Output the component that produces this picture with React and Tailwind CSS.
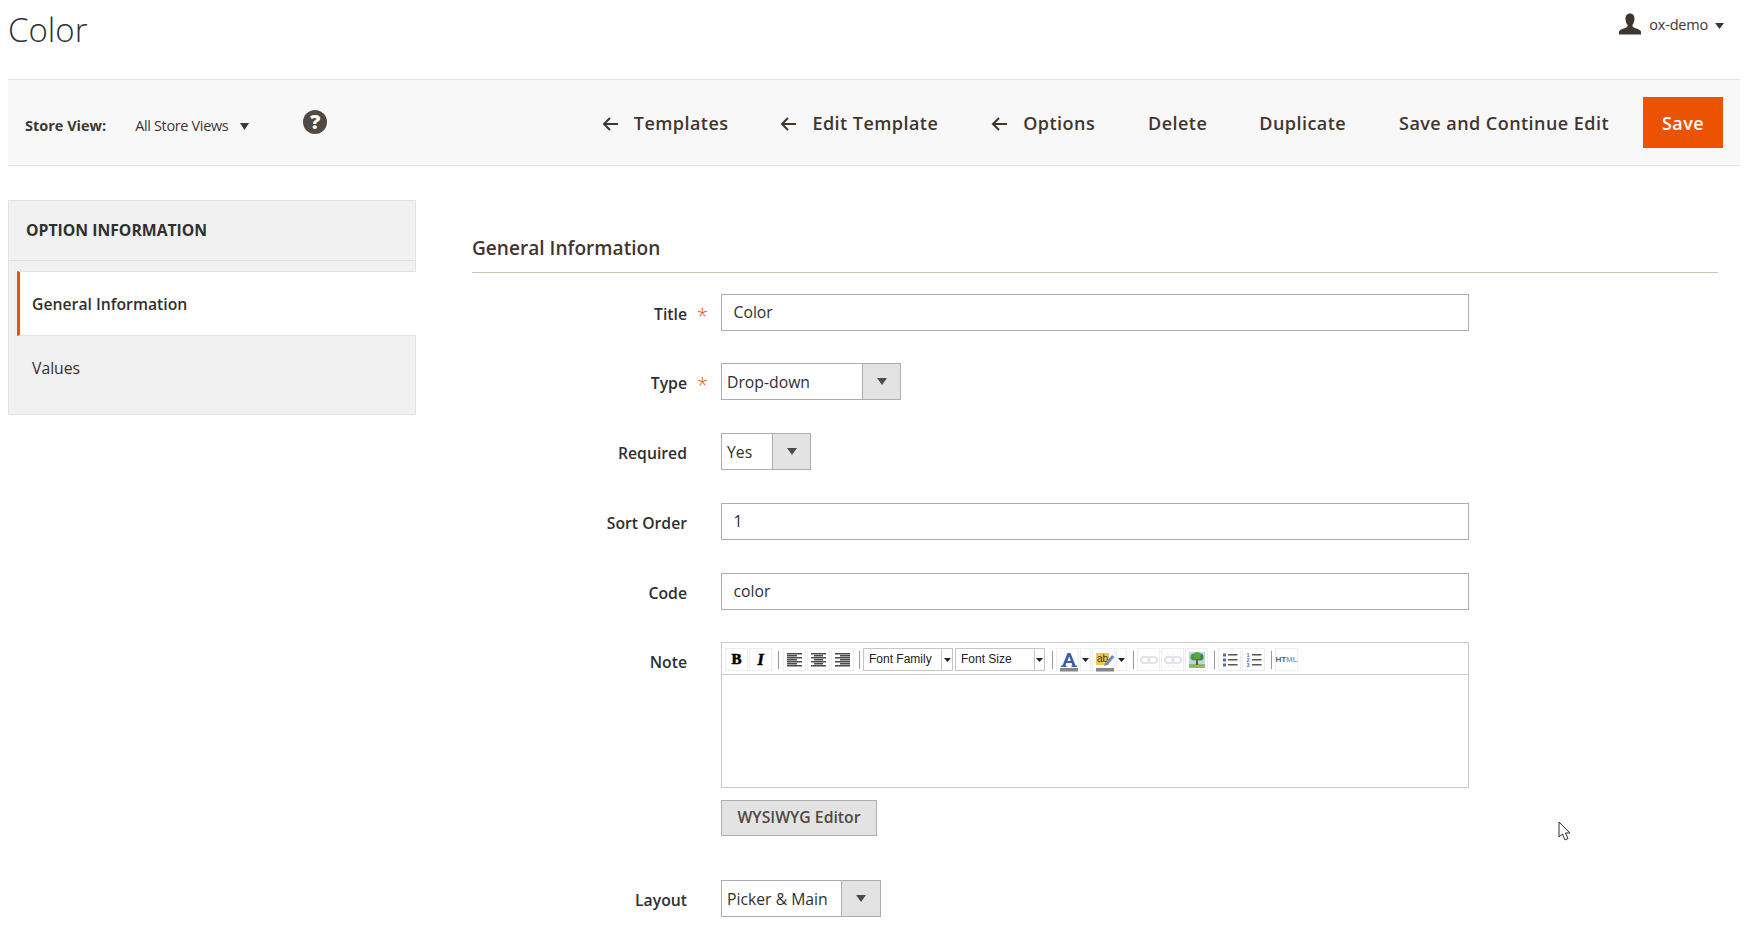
import React from "react";

const Label = ({ children, req }) => (
  <div className="w-[249px] shrink-0 flex justify-end pt-[8px] relative">
    <span className="font-semibold text-[15.75px] leading-[24px] text-[#303030] pr-[34px]">{children}</span>
    {req && <span className="absolute right-[13px] top-[10px] text-[#eb5202] text-[20px] font-light leading-[24px]">*</span>}
  </div>
);

const Row = ({ label, req, children, mb = "mb-[32px]" }) => (
  <div className={`flex ${mb}`}>
    <Label req={req}>{label}</Label>
    <div className="h-[37px]">{children}</div>
  </div>
);

const Input = ({ value }) => (
  <div className="w-[748px] h-[37px] border border-[#adadad] bg-white pl-[11.500px] text-[15.75px] leading-[35px] text-[#303030]">{value}</div>
);

const Select = ({ value, w, arrowW }) => (
  <div className="flex h-[37px] border border-[#adadad] bg-white" style={{ width: w }}>
    <div className="flex-1 pl-[5px] text-[15.75px] leading-[36px] text-[#303030]">{value}</div>
    <div className="h-full border-l border-[#adadad] bg-[#e3e3e3] flex items-center justify-center" style={{ width: arrowW }}>
      <svg width="10" height="7" viewBox="0 0 10 7"><path d="M0 0h10L5 7z" fill="#514943" /></svg>
    </div>
  </div>
);

const Arrow = () => (
  <svg width="17" height="14" viewBox="0 0 17 14" className="mr-[15px]" fill="none" stroke="#41362f" strokeWidth="2"><path d="M16 7H2M8 1 2 7l6 6" /></svg>
);

const TBtn = ({ children, w = "w-[23px]" }) => (
  <div className={`${w} h-[23px] border border-[#eeeeee] flex items-center justify-center mr-px shrink-0`}>{children}</div>
);
const Sep = ({ m = "ml-[5px] mr-[3px]" }) => <div className={`w-px h-[18px] bg-[#9a9a9a] shrink-0 ${m}`} />;
const Caret = () => <svg width="7" height="4" viewBox="0 0 7 4"><path d="M0 0h7L3.5 4z" fill="#222" /></svg>;

const Align = ({ lines }) => (
  <svg width="16" height="14" viewBox="0 0 16 14">
    {lines.map(([x, w], i) => <rect key={i} x={x} y={i * 2} width={w} height="1.500" fill="#4a4a4a" />)}
  </svg>
);

const DropBox = ({ label, w, arrow }) => (
  <div className="flex h-[23px] border border-[#c5c5c5] mr-[2px] shrink-0 bg-white" style={{ width: w }}>
    <div className="flex-1 pl-[5px] text-[12px] leading-[21px] text-[#222] font-['Liberation_Sans',sans-serif]">{label}</div>
    <div className="border-l border-[#c5c5c5] flex items-center justify-center" style={{ width: arrow }}><Caret /></div>
  </div>
);

const LinkIcon = ({ broken }) => (
  <svg width="18" height="16" viewBox="0 0 18 16" fill="none" stroke="#dfe4ea" strokeWidth="2">
    <rect x="1" y="5" width="8.500" height="6" rx="3" />
    <rect x="8.500" y="5" width="8.500" height="6" rx="3" />
    {broken && <path d="M9 0v3M9 13v3M3 1l2 2M15 1l-2 2M3 15l2-2M15 15l-2-2" strokeWidth="1" />}
  </svg>
);

export default function App() {
  return (
    <div className="font-['Open_Sans',sans-serif] bg-white text-[#303030] h-[929px] overflow-hidden pl-[8px] pr-[20px] relative">
      <header className="h-[79px] flex justify-between">
        <h1 className="text-[33px] leading-[44px] pt-[8px] font-light text-[#303030] h-[60px]">Color</h1>
        <div className="flex items-start pt-[13px] pr-[16px]">
          <svg width="24" height="22" viewBox="0 0 24 21" className="mr-[7px]"><path d="M12 0c3 0 4.500 2.200 4.500 5.500 0 2.500-1 4.800-2.200 6 0 1.500.7 2.300 2.700 3 3 1 5.500 2 6 3.500v3H1v-3c.5-1.500 3-2.500 6-3.500 2-.7 2.700-1.500 2.700-3C8.500 10.300 7.500 8 7.500 5.500 7.500 2.200 9 0 12 0z" fill="#41362f" /></svg>
          <span className="text-[14.500px] leading-[24px] text-[#41362f] tracking-[-0.2px]">ox-demo</span>
          <svg width="9" height="6" viewBox="0 0 9 6" className="ml-[7px] mt-[10px]"><path d="M0 0h9L4.500 6z" fill="#41362f" /></svg>
        </div>
      </header>

      <div className="h-[87px] bg-[#f8f8f8] border-y border-[#e3e3e3] flex items-center justify-between pl-[17px] pr-[17px]">
        <div className="flex items-center text-[14.500px]">
          <span className="font-bold text-[#41362f] mr-[29px] mt-[6px]">Store View:</span>
          <span className="text-[#41362f] tracking-[-0.35px] mt-[6px]">All Store Views</span>
          <svg width="9" height="7" viewBox="0 0 9 7" className="ml-[12px] mt-[7px]"><path d="M0 0h9L4.500 7z" fill="#41362f" /></svg>
          <span className="w-[24px] h-[24px] rounded-full bg-[#514943] text-white font-extrabold text-[20px] leading-[24px] text-center ml-[54px] -mt-[1px]">?</span>
        </div>
        <div className="flex items-center text-[#41362f] text-[18px] font-semibold tracking-[0.45px]">
          <div className="flex items-center mr-[52px] pt-[2px]"><Arrow />Templates</div>
          <div className="flex items-center mr-[53px] pt-[2px]"><Arrow />Edit Template</div>
          <div className="flex items-center mr-[53px] pt-[2px]"><Arrow />Options</div>
          <div className="mr-[52px] pt-[2px]">Delete</div>
          <div className="mr-[53px] pt-[2px]">Duplicate</div>
          <div className="mr-[34px] pt-[2px]">Save and Continue Edit</div>
          <div className="w-[80px] h-[51px] bg-[#eb5202] text-white flex items-center justify-center pt-[2px]">Save</div>
        </div>
      </div>

      <main className="flex pt-[34px]">
        <aside className="w-[408px] shrink-0 h-[215px] bg-[#f1f1f1] border border-[#e3e3e3] flex flex-col">
          <div className="h-[60px] border-b border-[#e3e3e3] flex items-center pl-[17px] font-bold text-[15.75px] text-[#303030]">OPTION INFORMATION</div>
          <div className="h-[10px]" />
          <div className="h-[65px] bg-white border-y border-[#e3e3e3] border-l-[3px] border-l-[#eb5202] ml-[8px] -mr-px flex items-center pl-[12px] pt-[2px] font-semibold text-[15.75px] text-[#303030]">General Information</div>
          <div className="pl-[23px] pt-[20px] text-[15.75px] leading-[24px] text-[#303030]">Values</div>
        </aside>

        <section className="flex-1 ml-[56px] min-w-0">
          <div className="h-[74px] -mt-[1px] pt-[33px] border-b border-[#cac3b4] mb-[21px] mr-[22px]">
            <h2 className="text-[19.100px] leading-[32px] font-semibold text-[#41362f]">General Information</h2>
          </div>
          <Row label="Title" req><Input value="Color" /></Row>
          <Row label="Type" req mb="mb-[33px]"><Select value="Drop-down" w={180} arrowW={38} /></Row>
          <Row label="Required" mb="mb-[33px]"><Select value="Yes" w={90} arrowW={38} /></Row>
          <Row label="Sort Order" mb="mb-[33px]"><Input value="1" /></Row>
          <Row label="Code"><Input value="color" /></Row>
          <div className="flex mb-[44px]">
            <Label>Note</Label>
            <div className="w-[748px]">
              <div className="h-[146px] border border-[#c9c9c9]">
                <div className="h-[32px] border-b border-[#c9c9c9] flex items-center pl-[3px] pt-[2px]">
                  <TBtn><span className="font-['Liberation_Serif',serif] font-bold text-[15px] text-black [-webkit-text-stroke:0.6px_black]">B</span></TBtn>
                  <TBtn><span className="font-['Liberation_Serif',serif] font-bold italic text-[16px] text-black [-webkit-text-stroke:0.6px_black]">I</span></TBtn>
                  <Sep m="ml-[5px] mr-[4px]" />
                  <TBtn><Align lines={[[0, 15], [0, 10], [0, 15], [0, 10], [0, 15], [0, 10], [0, 15]]} /></TBtn>
                  <TBtn><Align lines={[[0, 15], [3, 9], [0, 15], [3, 9], [0, 15], [3, 9], [0, 15]]} /></TBtn>
                  <TBtn><Align lines={[[0, 15], [5, 10], [0, 15], [5, 10], [0, 15], [5, 10], [0, 15]]} /></TBtn>
                  <Sep m="ml-[4px] mr-[3px]" />
                  <DropBox label="Font Family" w={90} arrow={11} />
                  <DropBox label="Font Size" w={90} arrow={10} />
                  <Sep />
                  <TBtn>
                    <svg width="21" height="21" viewBox="0 0 21 21" className="overflow-visible">
                      <path d="M10.500 4h3l5 12.500h1.500V18h-5.500v-1.500h1L14.500 14h-5l-1 2.500h1V18H4v-1.500h1.500z" fill="#3d5fa8" /><path d="M10.500 12h3.300L12.100 7.500z" fill="#fff" /><rect x="3" y="19" width="18" height="3.500" fill="#888" />
                    </svg>
                  </TBtn>
                  <TBtn w="w-[11px]"><Caret /></TBtn>
                  <TBtn>
                    <svg width="21" height="21" viewBox="0 0 21 21" className="overflow-visible">
                      <rect x="3" y="4" width="13" height="12" fill="#f0c74e" /><text x="4" y="13" fontSize="10" fontFamily="Liberation Sans, sans-serif" fill="#4a3a00">ab</text>
                      <path d="M12 14 19 6l2.500 2-7 8-3.500 1z" fill="#6f8fbf" /><rect x="3" y="19" width="18" height="3.500" fill="#888" />
                    </svg>
                  </TBtn>
                  <TBtn w="w-[11px]"><Caret /></TBtn>
                  <Sep />
                  <TBtn><LinkIcon /></TBtn>
                  <TBtn><LinkIcon broken /></TBtn>
                  <TBtn>
                    <svg width="18" height="18" viewBox="0 0 18 18">
                      <rect x="1" y="1" width="16" height="16" fill="#bcd6ee" /><rect x="1" y="13" width="16" height="4" fill="#8bbd62" />
                      <circle cx="6" cy="6" r="3.500" fill="#4c9a35" /><circle cx="12" cy="6" r="3.500" fill="#3f8a2e" /><circle cx="9" cy="4.500" r="3.500" fill="#5aa83f" />
                      <rect x="8" y="8" width="2" height="6" fill="#7a5326" />
                    </svg>
                  </TBtn>
                  <Sep />
                  <TBtn>
                    <svg width="16" height="16" viewBox="0 0 16 16">
                      <rect x="1" y="1.500" width="3" height="3" fill="#4d6fb8" /><rect x="1" y="6.500" width="3" height="3" fill="#4d6fb8" /><rect x="1" y="11.500" width="3" height="3" fill="#4d6fb8" />
                      <rect x="6" y="2" width="9.500" height="1.500" fill="#555" /><rect x="6" y="7" width="9.500" height="1.500" fill="#555" /><rect x="6" y="12" width="9.500" height="1.500" fill="#555" />
                    </svg>
                  </TBtn>
                  <TBtn>
                    <svg width="16" height="16" viewBox="0 0 16 16">
                      <text x="0.500" y="5" fontSize="5.500" fontWeight="700" fontFamily="Liberation Sans, sans-serif" fill="#4d6fb8">1</text>
                      <text x="0.500" y="10" fontSize="5.500" fontWeight="700" fontFamily="Liberation Sans, sans-serif" fill="#4d6fb8">2</text>
                      <text x="0.500" y="15" fontSize="5.500" fontWeight="700" fontFamily="Liberation Sans, sans-serif" fill="#4d6fb8">3</text>
                      <rect x="6" y="2" width="9.500" height="1.500" fill="#555" /><rect x="6" y="7" width="9.500" height="1.500" fill="#555" /><rect x="6" y="12" width="9.500" height="1.500" fill="#555" />
                    </svg>
                  </TBtn>
                  <Sep />
                  <TBtn><span className="font-['Liberation_Sans',sans-serif] font-bold text-[8px] text-[#3d5fa8]">HT<span className="text-[#8ea4d0]">ML</span></span></TBtn>
                </div>
              </div>
              <div className="mt-[12px] w-[156px] h-[36px] bg-[#e3e3e3] border border-[#adadad] flex items-center justify-center font-semibold text-[15.75px] text-[#514943]">WYSIWYG Editor</div>
            </div>
          </div>
          <Row label="Layout"><Select value="Picker & Main" w={160} arrowW={39} /></Row>
        </section>
      </main>

      <svg width="14" height="20" viewBox="0 0 14 20" className="absolute left-[1558px] top-[821px]">
        <path d="M1 1v15l3.500-3 2.500 6 3-1.500-2.500-5.500H12z" fill="#fff" stroke="#2a2a3a" strokeWidth="1" />
      </svg>
    </div>
  );
}
